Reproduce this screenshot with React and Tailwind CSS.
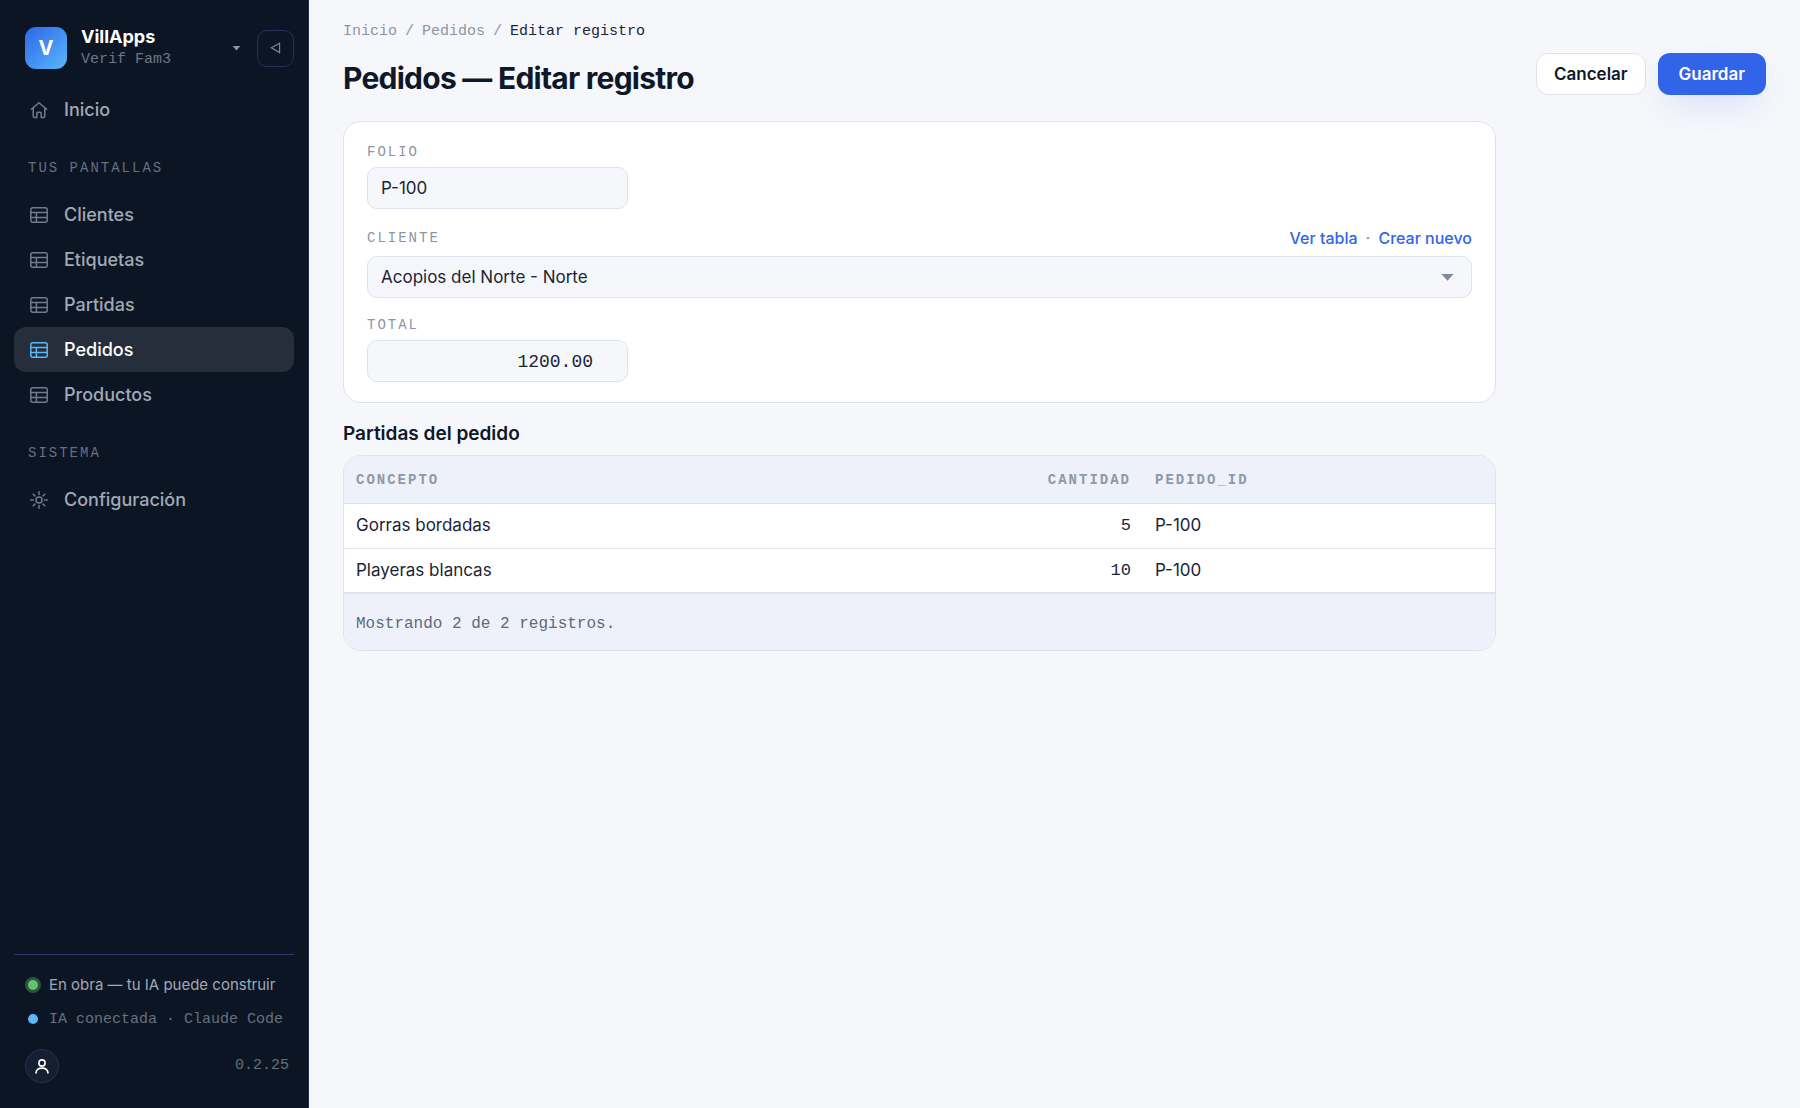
import { useState } from 'react';

const screens = ['Clientes', 'Etiquetas', 'Partidas', 'Pedidos', 'Productos'];

const rows = [
  { concepto: 'Gorras bordadas', cantidad: 5, pedidoId: 'P-100' },
  { concepto: 'Playeras blancas', cantidad: 10, pedidoId: 'P-100' },
];

const mono = "font-['Liberation_Mono',monospace]";

const iconProps = {
  viewBox: '0 0 18 18',
  fill: 'none',
  stroke: 'currentColor',
  strokeWidth: 1.5,
  strokeLinecap: 'round',
  strokeLinejoin: 'round',
  'aria-hidden': true,
};

const HomeIcon = () => (
  <svg {...iconProps} className="size-[18px]">
    <path d="M1.4 8.3 9 1.8l7.6 6.5" />
    <path d="M3.2 7v8.2c0 .7.5 1.2 1.2 1.2h2.4v-4c0-.7.5-1.2 1.2-1.2h2c.7 0 1.2.5 1.2 1.2v4h2.4c.7 0 1.2-.5 1.2-1.2V7" />
  </svg>
);

const TableIcon = () => (
  <svg {...iconProps} className="size-[18px]">
    <rect x="0.8" y="1.8" width="16.4" height="14.4" rx="2" />
    <path d="M.8 6.6h16.4M.8 11.4h16.4M6.4 6.6v9.6" />
  </svg>
);

const GearIcon = () => (
  <svg {...iconProps} className="size-[18px]">
    <circle cx="9" cy="9" r="3" />
    <path d="M9 .8v2.6M9 14.6v2.6M.8 9h2.6M14.6 9h2.6M3.2 3.2 5 5M13 13l1.8 1.8M14.8 3.2 13 5M5 13l-1.8 1.8" />
  </svg>
);

const NavItem = ({ icon: Icon, label, active }) => (
  <a
    href="#"
    aria-current={active ? 'page' : undefined}
    className={`flex h-[45px] items-center gap-4 rounded-xl px-4 pt-px text-lg font-medium ${
      active ? 'bg-[#262e3b] text-white' : 'text-[#a1a9b6]'
    }`}
  >
    <span className={active ? 'text-[#5ab7f8]' : 'text-[#717b8b]'}>
      <Icon />
    </span>
    {label}
  </a>
);

const NavHeading = ({ children }) => (
  <h2 className={`${mono} px-[14px] pt-[26px] pb-[14px] text-sm leading-5 tracking-[2px] text-[#657081] uppercase`}>
    {children}
  </h2>
);

const Sidebar = () => (
  <aside className="sticky top-0 flex h-screen w-[309px] shrink-0 flex-col border-r border-[#1f2f55] bg-[#0c1523] px-[14px] pt-[25px] pb-[25px]">
    <div className="mb-4 flex items-center pl-[11px]">
      <div className="flex size-[42px] items-center justify-center rounded-[11px] bg-linear-135 from-[#3264ea] to-[#5ab7f8] text-xl font-bold text-white">
        V
      </div>
      <div className="ml-[14px] flex-1">
        <p className="text-lg leading-6 font-bold text-white">VillApps</p>
        <p className={`${mono} text-[15px] leading-[22px] text-[#6b7585]`}>Verif Fam3</p>
      </div>
      <button type="button" aria-label="Cambiar aplicación" className="mr-4 text-[#8d96a5]">
        <svg viewBox="0 0 10 6" className="h-[5px] w-[9px]" fill="currentColor" aria-hidden="true">
          <path d="M.5 0h9L5 5.5z" />
        </svg>
      </button>
      <button
        type="button"
        aria-label="Contraer menú"
        className="flex size-[37px] items-center justify-center rounded-[10px] border border-[#22325a] text-[#7b8494]"
      >
        <svg viewBox="0 0 11 12" className="h-3 w-[11px]" fill="none" stroke="currentColor" strokeWidth="1.2" aria-hidden="true">
          <path d="M1.4 5.8 9.6 1.2v9.4z" />
        </svg>
      </button>
    </div>

    <nav>
      <NavItem icon={HomeIcon} label="Inicio" />
      <NavHeading>Tus pantallas</NavHeading>
      {screens.map((name) => (
        <NavItem key={name} icon={TableIcon} label={name} active={name === 'Pedidos'} />
      ))}
      <NavHeading>Sistema</NavHeading>
      <NavItem icon={GearIcon} label="Configuración" />
    </nav>

    {/* Status */}
    <div className="mt-auto border-t border-[#2a3c6b] pl-[11px]">
      <div className="mt-[18px] flex items-center">
        <span className="m-[3px] size-[10px] rounded-full bg-[#5fc46a] ring-3 ring-[#2a5440]" />
        <p className="ml-2 text-[15px] leading-6 whitespace-nowrap text-[#a1a9b6]">En obra — tu IA puede construir</p>
      </div>
      <div className="mt-[9px] flex items-center">
        <span className="m-[3px] size-[10px] rounded-full bg-[#5ab7f8]" />
        <p className={`${mono} ml-2 pt-[2px] text-[15px] leading-6 whitespace-nowrap text-[#657081]`}>
          IA conectada · Claude Code
        </p>
      </div>
      <div className="mt-[17px] flex items-center justify-between pr-[5px]">
        <button
          type="button"
          aria-label="Cuenta"
          className="flex size-[34px] items-center justify-center rounded-full border border-[#25335a] bg-[#141f30] text-white"
        >
          <svg viewBox="0 0 14 15" className="h-[15px] w-[14px]" fill="none" stroke="currentColor" strokeWidth="1.6" strokeLinecap="round" aria-hidden="true">
            <circle cx="7" cy="4" r="3.1" />
            <path d="M1 14c.2-3.2 2.7-4.9 6-4.9s5.8 1.7 6 4.9" />
          </svg>
        </button>
        <span className={`${mono} text-[15px] text-[#657081]`}>0.2.25</span>
      </div>
    </div>
  </aside>
);

const labelClass = `${mono} text-sm leading-5 tracking-[2px] text-[#8d95a3] uppercase`;
const fieldClass = 'h-[42px] rounded-[10px] border border-[#dde2ed] bg-[#f5f7fb] px-[13px] text-[#1b2536]';

const OrderForm = () => {
  const [cliente, setCliente] = useState('norte');

  return (
    <form id="pedido" className="flex flex-col rounded-[18px] border border-[#dde2ed] bg-white px-[23px] py-5">
      <label htmlFor="folio" className={labelClass}>Folio</label>
      <input id="folio" defaultValue="P-100" className={`${fieldClass} mt-[5px] w-[261px] text-[17px]`} />

      <div className="mt-[18px] flex items-center justify-between">
        <label htmlFor="cliente" className={labelClass}>Cliente</label>
        <div className="flex gap-2 text-base leading-[22px] font-medium text-[#3264ea]">
          <a href="#">Ver tabla</a>
          <span className="text-[#8d95a3]">·</span>
          <a href="#">Crear nuevo</a>
        </div>
      </div>
      <div className="relative mt-[7px]">
        <select
          id="cliente"
          value={cliente}
          onChange={(e) => setCliente(e.target.value)}
          className={`${fieldClass} w-full appearance-none pt-[2px] text-[17px]`}
        >
          <option value="norte">Acopios del Norte - Norte</option>
        </select>
        <svg viewBox="0 0 14 8" className="pointer-events-none absolute top-[18px] right-[18px] h-[7px] w-[13px] text-[#7f8a9c]" fill="currentColor" aria-hidden="true">
          <path d="M0 0h14L7 7.6z" />
        </svg>
      </div>

      <label htmlFor="total" className={`${labelClass} mt-[17px]`}>Total</label>
      <input
        id="total"
        inputMode="decimal"
        defaultValue="1200.00"
        className={`${fieldClass} ${mono} mt-[5px] w-[261px] pt-[2px] pr-[34px] text-right text-lg`}
      />
    </form>
  );
};

const thClass = `${mono} h-[47px] px-3 pt-px text-sm font-bold tracking-[2px] text-[#8f98a7] uppercase`;

const LinesTable = () => (
  <div className="overflow-hidden rounded-[18px] border border-[#dde2ed] bg-white">
    <table className="w-full table-fixed text-[17px] text-[#1b2536]">
      <thead>
        <tr className="border-b border-[#dde2ed] bg-[#eef1f9]">
          <th scope="col" className={`${thClass} text-left`}>Concepto</th>
          <th scope="col" className={`${thClass} w-[150px] text-right`}>Cantidad</th>
          <th scope="col" className={`${thClass} w-[352px] text-left`}>Pedido_id</th>
        </tr>
      </thead>
      <tbody>
        {rows.map((row) => (
          <tr key={row.concepto} className="h-[45px] border-b border-[#e3e7f0] last:border-b-2 last:border-[#dfe3ed]">
            <td className="px-3">{row.concepto}</td>
            <td className={`${mono} px-3 text-right`}>{row.cantidad}</td>
            <td className="px-3">{row.pedidoId}</td>
          </tr>
        ))}
      </tbody>
      <tfoot>
        <tr className="h-[57px] bg-[#eef1f9]">
          <td colSpan={3} className={`${mono} px-3 pt-[3px] text-base text-[#5f6a7c]`}>Mostrando 2 de 2 registros.</td>
        </tr>
      </tfoot>
    </table>
  </div>
);

export default function App() {
  return (
    <div className="flex min-h-screen bg-[#f5f7fb] font-['Inter',sans-serif] text-[#0f1828]">
      <Sidebar />
      <main className="min-w-0 flex-1 px-[34px] pt-[21px] pb-8">
        <header className="flex items-end justify-between">
          <div>
            <nav aria-label="Ruta" className={`${mono} flex gap-2 text-[15px] leading-[22px] text-[#8d95a3]`}>
              <a href="#">Inicio</a>
              <span>/</span>
              <a href="#">Pedidos</a>
              <span>/</span>
              <span className="text-[#1b2536]">Editar registro</span>
            </nav>
            <h1 className="mt-[18px] overflow-hidden text-3xl leading-[34px] font-bold tracking-tight">
              Pedidos — Editar registro
            </h1>
          </div>
          <div className="flex gap-3">
            <button type="button" className="h-[42px] rounded-xl border border-[#dde2ed] bg-white px-[17px] pt-px text-[17px] font-semibold">
              Cancelar
            </button>
            <button
              type="submit"
              form="pedido"
              className="h-[42px] rounded-xl bg-[#3264ea] px-[21px] pt-px text-[17px] font-semibold text-white shadow-[0_14px_34px_-10px_rgba(50,100,234,0.22)]"
            >
              Guardar
            </button>
          </div>
        </header>

        <div className="mt-[26px] max-w-[1153px]">
          <OrderForm />
          <h2 className="mt-[18px] mb-2 text-[19px] leading-[26px] font-semibold">Partidas del pedido</h2>
          <LinesTable />
        </div>
      </main>
    </div>
  );
}
